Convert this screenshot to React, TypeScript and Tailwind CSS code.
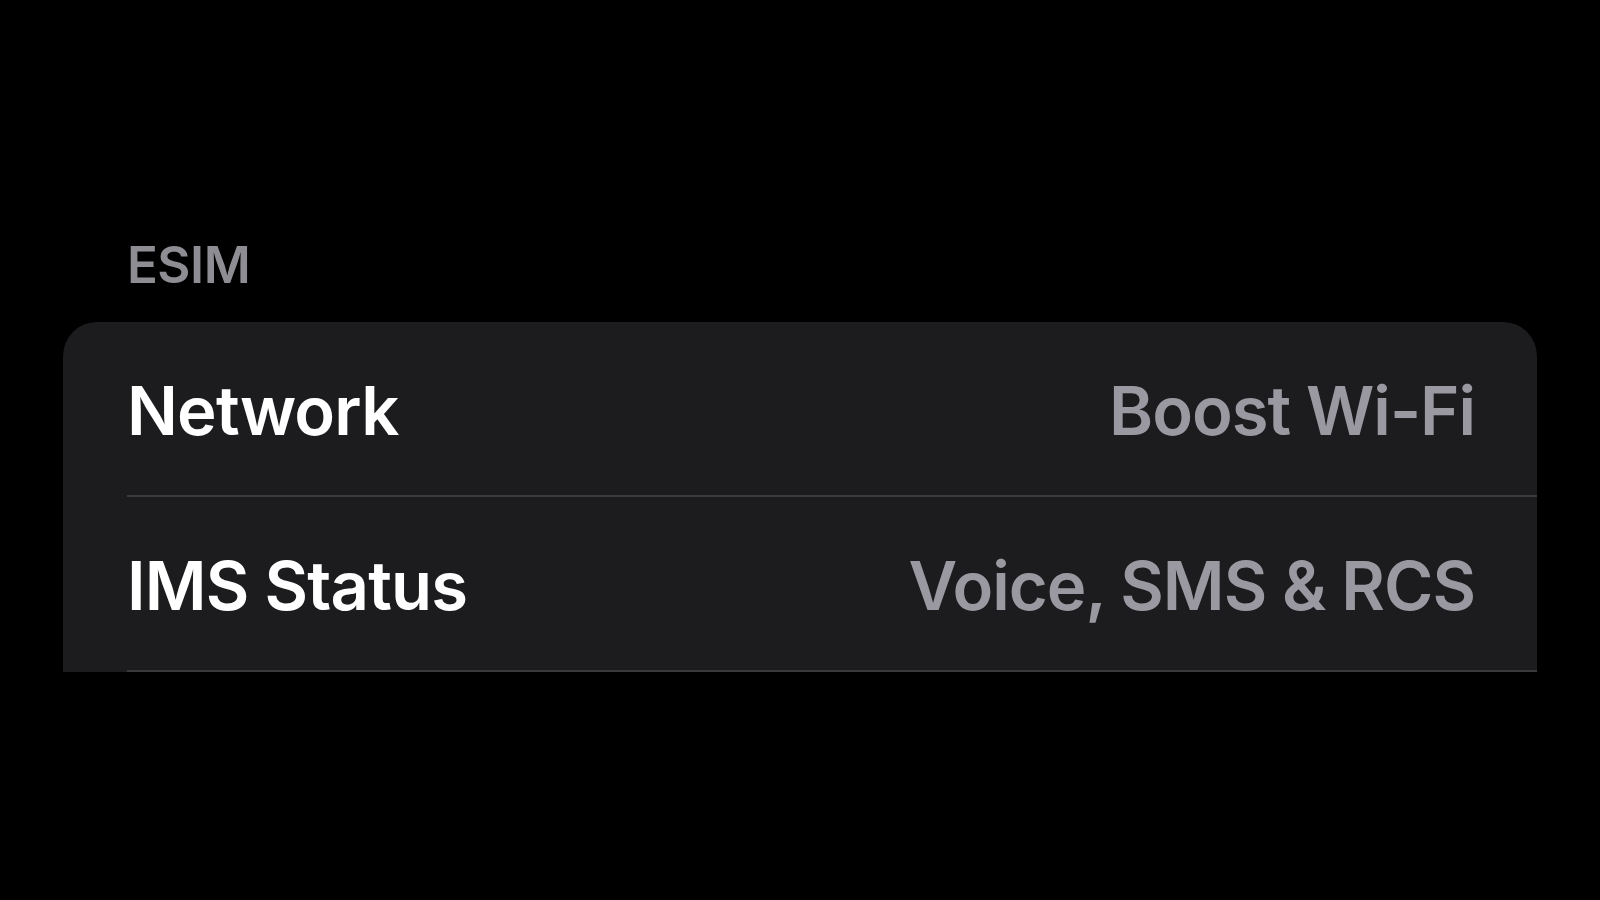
import React from "react";

const rows = [
  { label: "Network", value: "Boost Wi-Fi" },
  { label: "IMS Status", value: "Voice, SMS & RCS" },
];

export default function App() {
  return (
    <div
      className="w-[1600px] h-[900px] bg-black overflow-hidden pt-[239px]"
      style={{ fontFamily: "Inter, 'Noto Sans', sans-serif" }}
    >
      <div className="ml-[127px] h-[51px] flex items-center text-[51px] leading-none font-semibold tracking-[-0.01em] text-[#8d8d93]">
        ESIM
      </div>
      <div className="mt-[32px] ml-[63px] w-[1474px] bg-[#1c1c1e] rounded-t-[34px] pl-[64px]">
        {rows.map((r) => (
          <div
            key={r.label}
            className="h-[175px] pt-[4px] flex items-center justify-between pr-[62px] border-b-2 border-[#3a3a3c]"
          >
            <span className="text-[67px] leading-none font-semibold tracking-[-0.012em] text-white">
              {r.label}
            </span>
            <span className="text-[67px] leading-none font-semibold tracking-[-0.015em] text-[#9a99a1]">
              {r.value}
            </span>
          </div>
        ))}
      </div>
    </div>
  );
}
